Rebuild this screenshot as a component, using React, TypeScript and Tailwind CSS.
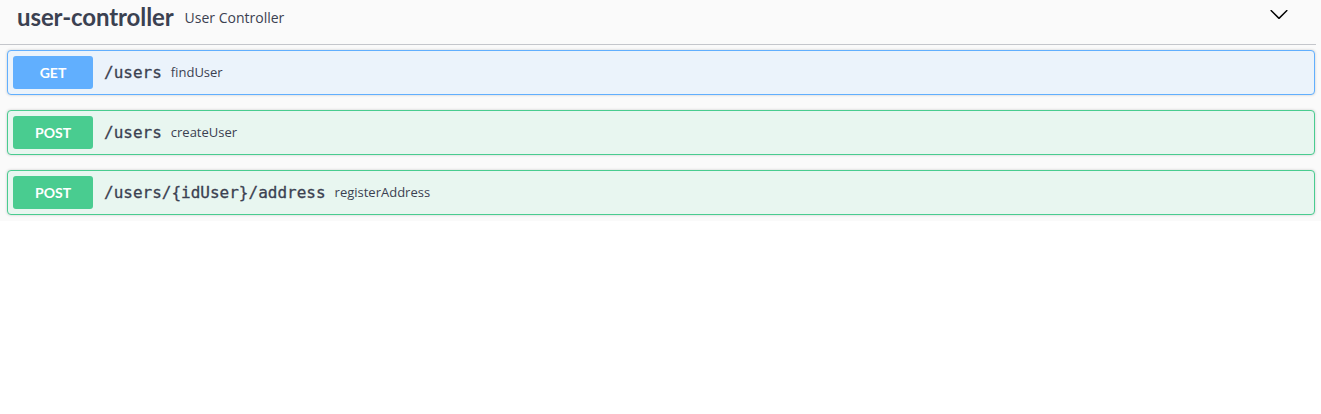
import React from 'react';

type Op = { method: 'GET' | 'POST'; path: string; summary: string };

const ops: Op[] = [
  { method: 'GET', path: '/users', summary: 'findUser' },
  { method: 'POST', path: '/users', summary: 'createUser' },
  { method: 'POST', path: '/users/{idUser}/address', summary: 'registerAddress' },
];

const OpBlock: React.FC<{ op: Op }> = ({ op }) => {
  const isGet = op.method === 'GET';
  return (
    <div
      className={`mb-[15px] flex items-center rounded-[4px] border p-[5px] shadow-[0_0_3px_rgba(0,0,0,0.19)] ${
        isGet ? 'border-[#61affe] bg-[#ebf3fb]' : 'border-[#49cc90] bg-[#e8f6f0]'
      }`}
    >
      <span
        className={`flex h-[33px] w-[80px] items-center justify-center rounded-[3px] text-[14px] font-bold text-white [font-family:Lato,sans-serif] ${
          isGet ? 'bg-[#61affe]' : 'bg-[#49cc90]'
        }`}
      >
        {op.method}
      </span>
      <span className="pl-[11px] pr-[9px] text-[16px] font-normal text-[#3b4151] [font-family:'DejaVu_Sans_Mono',monospace] [-webkit-text-stroke:0.3px_#3b4151]">
        {op.path}
      </span>
      <span className="text-[13px] text-[#3b4151] [font-family:'Open_Sans',sans-serif]">{op.summary}</span>
    </div>
  );
};

export default function App() {
  return (
    <div className="min-h-[414px] bg-white">
      <div className="bg-[#fafafa] pb-[1px]">
        {/* tag header */}
        <div className="mr-[5px] flex h-[45px] items-start border-b border-[#c4c6cb] pl-[17px] pr-[27px]">
          <div className="flex h-[34px] flex-1 items-center">
            <h3 className="text-[24px] font-bold tracking-[-0.1px] text-[#3b4151] [font-family:Lato,sans-serif]">
              user-controller
            </h3>
            <span className="ml-[11px] text-[14px] text-[#3b4151] [font-family:'Open_Sans',sans-serif]">
              User Controller
            </span>
          </div>
          <svg width="20" height="20" viewBox="0 0 20 20" className="mt-[4px]">
            <path
              fill="#000"
              d="M17.418 6.109c.272-.268.709-.268.979 0s.271.701 0 .969l-7.908 7.83c-.27.268-.707.268-.979 0l-7.908-7.83c-.27-.268-.27-.701 0-.969.271-.268.709-.268.979 0L10 13.25l7.418-7.141z"
            />
          </svg>
        </div>

        {/* operations */}
        <div className="ml-[7px] mr-[6px] mt-[5px] [&>div:last-child]:mb-[5px]">
          {ops.map((op, i) => (
            <OpBlock key={i} op={op} />
          ))}
        </div>
      </div>
    </div>
  );
}
